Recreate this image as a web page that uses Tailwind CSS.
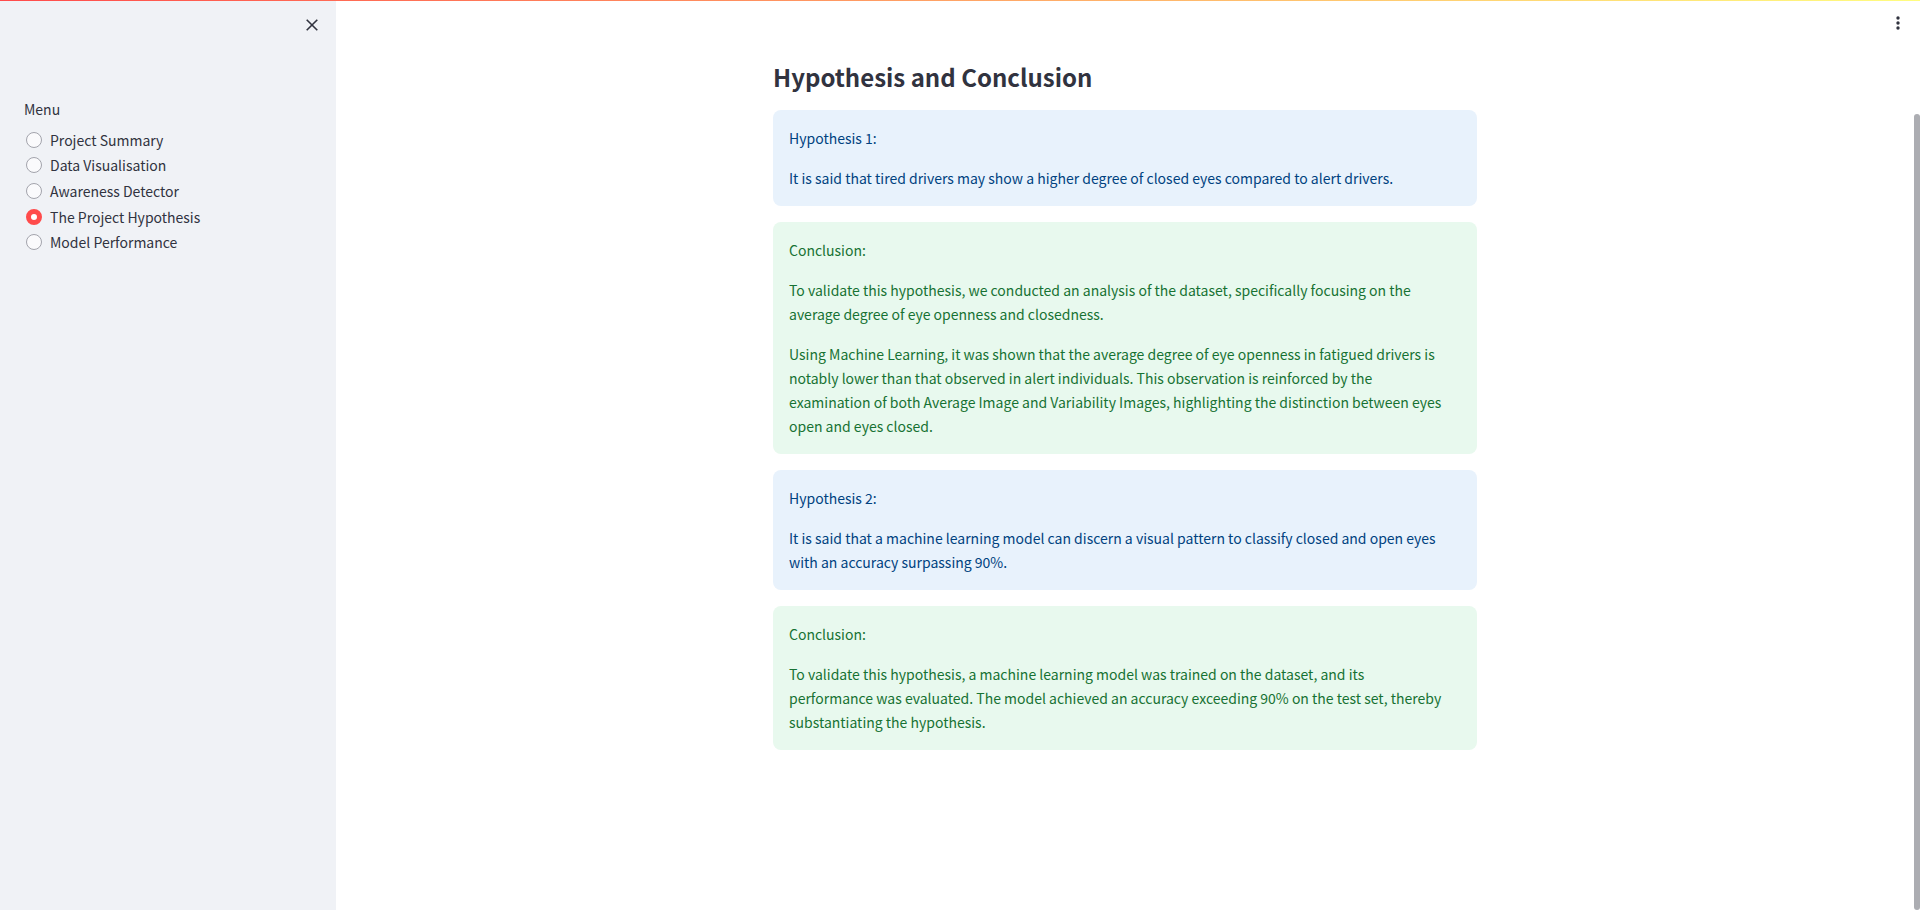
<!DOCTYPE html>
<html lang="en">
<head>
<meta charset="utf-8">
<meta name="viewport" content="width=device-width, initial-scale=1">
<title>Hypothesis and Conclusion</title>
<script src="https://cdn.jsdelivr.net/npm/@tailwindcss/browser@4"></script>
</head>
<body class="flex h-screen overflow-hidden bg-white font-['Noto_Sans_CJK_SC',sans-serif] text-[14px] leading-6 text-[#31333f]">
  <div class="fixed inset-x-0 top-0 z-10 h-px bg-linear-to-r/srgb from-[#ff4b4b] to-[#fffd80]"></div>

  <aside class="flex w-[336px] shrink-0 flex-col bg-[#f0f2f6]">
    <div class="flex justify-end px-4 pt-[17px]">
      <button type="button" aria-label="Close sidebar" class="flex size-4 items-center justify-center">
        <svg class="size-4" viewBox="0 0 16 16" fill="none" stroke="#31333f" stroke-width="1.6" aria-hidden="true"><path d="M2.7 2.7 13.3 13.3M13.3 2.7 2.7 13.3"/></svg>
      </button>
    </div>
    <fieldset class="mt-16 px-6">
      <legend class="mb-[6px]">Menu</legend>
      <div class="flex h-32 flex-col">
        <label class="flex flex-1 items-center gap-2 pl-[2px]"><input type="radio" name="menu" class="size-4 appearance-none rounded-full border border-[#a3a4ac] bg-[#fafafc]"><span>Project Summary</span></label>
        <label class="flex flex-1 items-center gap-2 pl-[2px]"><input type="radio" name="menu" class="size-4 appearance-none rounded-full border border-[#a3a4ac] bg-[#fafafc]"><span>Data Visualisation</span></label>
        <label class="flex flex-1 items-center gap-2 pl-[2px]"><input type="radio" name="menu" class="size-4 appearance-none rounded-full border border-[#a3a4ac] bg-[#fafafc]"><span>Awareness Detector</span></label>
        <label class="flex flex-1 items-center gap-2 pl-[2px]"><input type="radio" name="menu" checked class="size-4 appearance-none rounded-full border-[5px] border-[#ff4b4b] bg-white"><span>The Project Hypothesis</span></label>
        <label class="flex flex-1 items-center gap-2 pl-[2px]"><input type="radio" name="menu" class="size-4 appearance-none rounded-full border border-[#a3a4ac] bg-[#fafafc]"><span>Model Performance</span></label>
      </div>
    </fieldset>
  </aside>

  <div class="relative flex min-w-0 flex-1">
    <main class="flex min-w-0 flex-1 justify-center overflow-hidden">
      <div class="w-full max-w-[704px] pt-[60px]">
        <h1 class="mb-4 text-2xl leading-[34px] font-semibold">Hypothesis and Conclusion</h1>
        <div class="flex flex-col gap-4">
          <section class="flex flex-col gap-4 rounded-lg bg-[#e8f2fc] p-4 text-[#004280]">
            <p>Hypothesis 1:</p>
            <p>It is said that tired drivers may show a higher degree of closed eyes compared to alert drivers.</p>
          </section>
          <section class="flex flex-col gap-4 rounded-lg bg-[#e8f9ee] p-4 text-[#177233]">
            <p>Conclusion:</p>
            <p>To validate this hypothesis, we conducted an analysis of the dataset, specifically focusing on the<br>average degree of eye openness and closedness.</p>
            <p>Using Machine Learning, it was shown that the average degree of eye openness in fatigued drivers is<br>notably lower than that observed in alert individuals. This observation is reinforced by the<br>examination of both Average Image and Variability Images, highlighting the distinction between eyes<br>open and eyes closed.</p>
          </section>
          <section class="flex flex-col gap-4 rounded-lg bg-[#e8f2fc] p-4 text-[#004280]">
            <p>Hypothesis 2:</p>
            <p>It is said that a machine learning model can discern a visual pattern to classify closed and open eyes<br>with an accuracy surpassing 90%.</p>
          </section>
          <section class="flex flex-col gap-4 rounded-lg bg-[#e8f9ee] p-4 text-[#177233]">
            <p>Conclusion:</p>
            <p>To validate this hypothesis, a machine learning model was trained on the dataset, and its<br>performance was evaluated. The model achieved an accuracy exceeding 90% on the test set, thereby<br>substantiating the hypothesis.</p>
          </section>
        </div>
      </div>
    </main>
    <div class="flex w-[6px] shrink-0 flex-col pt-[114px]" aria-hidden="true">
      <div class="flex-1 rounded-full bg-[#acadb2]"></div>
    </div>
    <button type="button" aria-label="Main menu" class="absolute top-[15px] right-[14px] size-4">
      <svg class="size-4" viewBox="0 0 16 16" fill="#31333f" aria-hidden="true"><circle cx="8" cy="3" r="1.7"/><circle cx="8" cy="8" r="1.7"/><circle cx="8" cy="13" r="1.7"/></svg>
    </button>
  </div>
</body>
</html>
